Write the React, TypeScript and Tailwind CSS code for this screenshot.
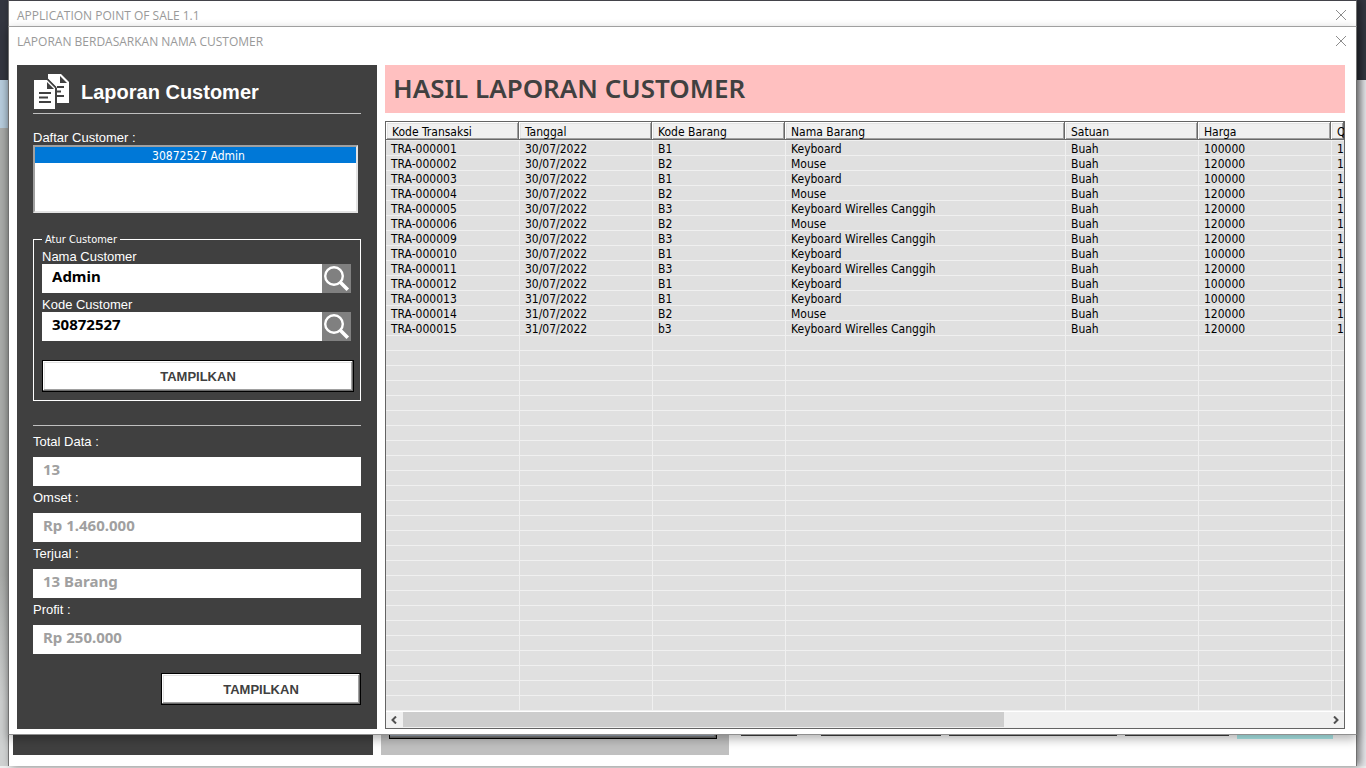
import React from "react";

const SANS = "font-['Liberation_Sans',Arial,sans-serif]";
const UI = "font-['DejaVu_Sans_Condensed','Noto_Sans',Tahoma,sans-serif]";
const LABEL = "block pt-0.5 text-[13px] leading-[14px] text-white";

type Row = { kode: string; tanggal: string; barang: string; nama: string; harga: string };

const rows: Row[] = [
  { kode: "TRA-000001", tanggal: "30/07/2022", barang: "B1", nama: "Keyboard", harga: "100000" },
  { kode: "TRA-000002", tanggal: "30/07/2022", barang: "B2", nama: "Mouse", harga: "120000" },
  { kode: "TRA-000003", tanggal: "30/07/2022", barang: "B1", nama: "Keyboard", harga: "100000" },
  { kode: "TRA-000004", tanggal: "30/07/2022", barang: "B2", nama: "Mouse", harga: "120000" },
  { kode: "TRA-000005", tanggal: "30/07/2022", barang: "B3", nama: "Keyboard Wirelles Canggih", harga: "120000" },
  { kode: "TRA-000006", tanggal: "30/07/2022", barang: "B2", nama: "Mouse", harga: "120000" },
  { kode: "TRA-000009", tanggal: "30/07/2022", barang: "B3", nama: "Keyboard Wirelles Canggih", harga: "120000" },
  { kode: "TRA-000010", tanggal: "30/07/2022", barang: "B1", nama: "Keyboard", harga: "100000" },
  { kode: "TRA-000011", tanggal: "30/07/2022", barang: "B3", nama: "Keyboard Wirelles Canggih", harga: "120000" },
  { kode: "TRA-000012", tanggal: "30/07/2022", barang: "B1", nama: "Keyboard", harga: "100000" },
  { kode: "TRA-000013", tanggal: "31/07/2022", barang: "B1", nama: "Keyboard", harga: "100000" },
  { kode: "TRA-000014", tanggal: "31/07/2022", barang: "B2", nama: "Mouse", harga: "120000" },
  { kode: "TRA-000015", tanggal: "31/07/2022", barang: "b3", nama: "Keyboard Wirelles Canggih", harga: "120000" },
];

const headers = ["Kode Transaksi", "Tanggal", "Kode Barang", "Nama Barang", "Satuan", "Harga", "Q"];
const EMPTY_ROWS = 25;

const totals = [
  { id: "total", label: "Total Data :", value: "13" },
  { id: "omset", label: "Omset :", value: "Rp 1.460.000" },
  { id: "terjual", label: "Terjual :", value: "13 Barang" },
  { id: "profit", label: "Profit :", value: "Rp 250.000" },
];

function CloseButton({ label }: { label: string }) {
  return (
    <button type="button" aria-label={label} className="flex size-5 items-center justify-center">
      <svg width="12" height="12" viewBox="0 0 12 12" fill="none" stroke="#8c8c8c" strokeWidth="1">
        <path d="M1 1 L11 11 M11 1 L1 11" />
      </svg>
    </button>
  );
}

function TitleBar({ title }: { title: string }) {
  return (
    <div className="flex h-7 items-center justify-between pl-2 pr-[5px]">
      <span className="pt-0.5 font-['Open_Sans','Noto_Sans',sans-serif] text-[12px] leading-4 text-[#999999]">{title}</span>
      <CloseButton label={`Tutup ${title}`} />
    </div>
  );
}

function DocumentsIcon() {
  return (
    <svg width="36" height="36" viewBox="0 0 36 36" aria-hidden="true">
      <path fill="#fff" d="M14 0H27L35 8V29H23V14L14 5Z" />
      <path fill="#404040" d="M26 2V9H33Z" />
      <path fill="#fff" d="M0 6H13L21 14V35H0Z" />
      <path stroke="#404040" strokeWidth="1.2" d="M13.5 5L22 13.5" />
      <path fill="#404040" d="M13 8V15H20Z" />
      <path
        stroke="#404040"
        strokeWidth="2"
        d="M5 19H17M5 23.5H14M5 28H17M23 13H30M23 17.5H27M23 22H30"
      />
    </svg>
  );
}

function SearchIcon() {
  return (
    <svg width="29" height="29" viewBox="0 0 29 29" fill="none" stroke="#fff" aria-hidden="true">
      <circle cx="12" cy="12" r="8.8" strokeWidth="2.4" />
      <path d="M18.3 18.3L25.8 25.8" strokeWidth="3.6" />
    </svg>
  );
}

function ShowButton({ className }: { className: string }) {
  return (
    <button
      type="button"
      className={`${className} ${SANS} h-8 border border-black bg-white pt-0.5 text-[13px] font-bold text-[#404040] shadow-[inset_-1px_-1px_0_#696969,inset_1px_1px_0_#ffffff,inset_-2px_-2px_0_#a0a0a0,inset_2px_2px_0_#e3e3e3]`}
    >
      TAMPILKAN
    </button>
  );
}

function SearchField({ id, label, value }: { id: string; label: string; value: string }) {
  return (
    <div>
      <label htmlFor={id} className={`${SANS} ${LABEL}`}>
        {label}
      </label>
      <div className="mr-[3px] flex">
        <input
          id={id}
          defaultValue={value}
          className="h-[29px] w-full min-w-0 flex-1 bg-white pb-1.5 pl-2.5 font-['Noto_Sans',sans-serif] text-[15px] font-bold text-black outline-none"
        />
        <button type="button" aria-label={`Cari ${label}`} className="size-[29px] bg-[#808080]">
          <SearchIcon />
        </button>
      </div>
    </div>
  );
}

function Sidebar() {
  return (
    <aside className="flex w-[360px] shrink-0 flex-col bg-[#404040] px-4 pt-2 pb-6">
      <header className="flex h-[41px] items-center gap-[11px] border-b border-[#c0c0c0] pb-0.5 pl-px">
        <DocumentsIcon />
        <h2 className={`${SANS} text-[20px] leading-6 font-bold text-white`}>Laporan Customer</h2>
      </header>

      <label htmlFor="daftar" className={`${SANS} ${LABEL} mt-[15px]`}>
        Daftar Customer :
      </label>
      <select
        id="daftar"
        size={4}
        defaultValue="30872527"
        className="mr-[3px] h-[68px] appearance-none overflow-hidden border-2 border-t-[#a0a0a0] border-r-[#e3e3e3] border-b-[#e3e3e3] border-l-[#a0a0a0] bg-white outline-none"
      >
        <option
          value="30872527"
          className={`${UI} h-4 min-h-0 p-0 pt-0.5 pl-1.5 text-center text-[12px] leading-[14px] [-webkit-text-fill-color:#ffffff] checked:bg-[linear-gradient(#0078d7,#0078d7)]`}
        >
          30872527 Admin
        </option>
      </select>

      <fieldset className="mt-[19px] border border-white pr-1.5 pb-2 pl-2">
        <legend className={`${UI} px-[3px] pt-px text-[11px] leading-[14px] text-white`}>Atur Customer</legend>
        <div className="flex flex-col gap-[3px] pt-px">
          <SearchField id="nama" label="Nama Customer" value="Admin" />
          <SearchField id="kode" label="Kode Customer" value="30872527" />
        </div>
        <ShowButton className="mt-[19px] block w-full" />
      </fieldset>

      <hr className="mt-6 border-[#c0c0c0]" />

      <div className="mt-[7px] flex flex-col gap-[3px]">
        {totals.map((t) => (
          <div key={t.id}>
            <label htmlFor={t.id} className={`${SANS} ${LABEL}`}>
              {t.label}
            </label>
            <input
              id={t.id}
              readOnly
              value={t.value}
              className="mt-2 block h-[29px] w-full bg-white pb-1.5 pl-2.5 font-['Noto_Sans',sans-serif] text-[15px] font-bold text-[#a0a0a0] outline-none"
            />
          </div>
        ))}
      </div>
      <ShowButton className="mt-[19px] w-[200px] self-end" />
    </aside>
  );
}

function ResultTable() {
  const cell = "h-[15px] border-b border-[#f0f0f0] p-0 pt-0.5 pl-[5px] not-first:border-l whitespace-nowrap";
  return (
    <div className="flex flex-1 flex-col border border-[#646464] bg-[#e0e0e0]">
      <div className="flex-1 overflow-hidden">
        <table className={`${UI} w-full table-fixed border-separate border-spacing-0 text-[12px] leading-[12px] text-black`}>
          <colgroup>
            <col className="w-[133px]" />
            <col className="w-[133px]" />
            <col className="w-[133px]" />
            <col className="w-[280px]" />
            <col className="w-[133px]" />
            <col className="w-[133px]" />
            <col />
          </colgroup>
          <thead>
            <tr>
              {headers.map((h) => (
                <th
                  key={h}
                  scope="col"
                  className="h-[19px] overflow-hidden border-b border-[#f0f0f0] bg-[#f0f0f0] p-0 pt-0.5 pl-1.5 text-left font-normal whitespace-nowrap shadow-[inset_-1px_-1px_0_#696969,inset_1px_1px_0_#ffffff,inset_-2px_-2px_0_#a0a0a0,inset_2px_2px_0_#e3e3e3]"
                >
                  {h}
                </th>
              ))}
            </tr>
          </thead>
          <tbody>
            {rows.map((r) => (
              <tr key={r.kode}>
                <td className={cell}>{r.kode}</td>
                <td className={cell}>{r.tanggal}</td>
                <td className={cell}>{r.barang}</td>
                <td className={cell}>{r.nama}</td>
                <td className={cell}>Buah</td>
                <td className={cell}>{r.harga}</td>
                <td className={cell}>1</td>
              </tr>
            ))}
            {Array.from({ length: EMPTY_ROWS }, (_, i) => (
              <tr key={i}>
                {headers.map((h) => (
                  <td key={h} className={cell} />
                ))}
              </tr>
            ))}
          </tbody>
        </table>
      </div>
      <div className="flex h-[17px] border-t border-b border-t-white border-b-[#f0f0f0] bg-[#f0f0f0]">
        <button type="button" aria-label="Gulir ke kiri" className="flex w-[17px] items-center justify-center">
          <svg width="7" height="8" viewBox="0 0 7 8" fill="none" stroke="#505050" strokeWidth="2">
            <path d="M5 0.5L1.5 4L5 7.5" />
          </svg>
        </button>
        <div className="flex-1">
          <div className="h-full w-[65%] bg-[#cdcdcd]" />
        </div>
        <button type="button" aria-label="Gulir ke kanan" className="flex w-[17px] items-center justify-center">
          <svg width="7" height="8" viewBox="0 0 7 8" fill="none" stroke="#505050" strokeWidth="2">
            <path d="M2 0.5L5.5 4L2 7.5" />
          </svg>
        </button>
      </div>
    </div>
  );
}

function MainWindow() {
  return (
    <div className="absolute top-0 right-[9px] bottom-0.5 left-2 flex flex-col justify-between border border-b-0 border-[#707070] border-t-[#43434a] bg-white shadow-[3px_0_8px_rgba(0,0,0,0.5)]">
      <TitleBar title="APPLICATION POINT OF SALE 1.1" />
      <div className="flex items-end gap-2 pb-[11px] pl-1" aria-hidden="true">
        <div className="h-10 w-[360px] bg-[#404040]" />
        <div className="h-10 w-[348px] bg-[#c0c0c0] pr-3 pb-4 pl-2">
          <div className="h-full border border-black bg-[#99a5b5] shadow-[inset_-1px_-1px_0_#696969,inset_-2px_-2px_0_#808080]" />
        </div>
        <div className="ml-1 flex items-end gap-2 pb-4">
          <div className="mr-4 mb-[3px] h-5 w-14 border border-[#404040]" />
          <div className="mb-[3px] h-5 w-[120px] border border-[#404040]" />
          <div className="mb-[3px] h-5 w-[168px] border border-[#404040]" />
          <div className="mb-[3px] h-5 w-[104px] border border-[#404040]" />
          <div className="h-5 w-24 bg-[#afeeee]" />
        </div>
      </div>
    </div>
  );
}

export default function App() {
  return (
    <div className="relative flex min-h-screen flex-col overflow-hidden bg-[#efefef]">
      <div className="absolute inset-0 flex flex-col" aria-hidden="true">
        <div className="h-20 bg-[#343741]" />
        <div className="flex flex-1 justify-between bg-[#e6e7ea]">
          <div className="flex w-10 flex-col">
            <div className="h-12 bg-[#b9cfe0]" />
            <div className="flex-1 bg-linear-to-b from-[#acaeac] from-70% to-[#d0d2d2] to-90%" />
          </div>
        </div>
        <div className="h-0.5 bg-[#efefef]" />
      </div>
      <MainWindow />
      <div className="relative mt-[26px] mr-[9px] mb-[33px] ml-2 flex flex-1 flex-col border border-[#707070] border-t-[#a0a0a0] border-b-[#909090] bg-white shadow-[0_4px_10px_rgba(0,0,0,0.3)]">
        <TitleBar title="LAPORAN BERDASARKAN NAMA CUSTOMER" />
        <div className="flex flex-1 gap-2 pt-2.5 pr-[11px] pb-[5px] pl-2">
          <Sidebar />
          <main className="flex min-w-0 flex-1 flex-col gap-2">
            <h1 className="h-12 bg-[#ffc0c0] pl-2 font-['Noto_Sans',sans-serif] text-[26px] leading-[46px] font-semibold text-[#404040]">
              HASIL LAPORAN CUSTOMER
            </h1>
            <ResultTable />
          </main>
        </div>
      </div>
    </div>
  );
}
